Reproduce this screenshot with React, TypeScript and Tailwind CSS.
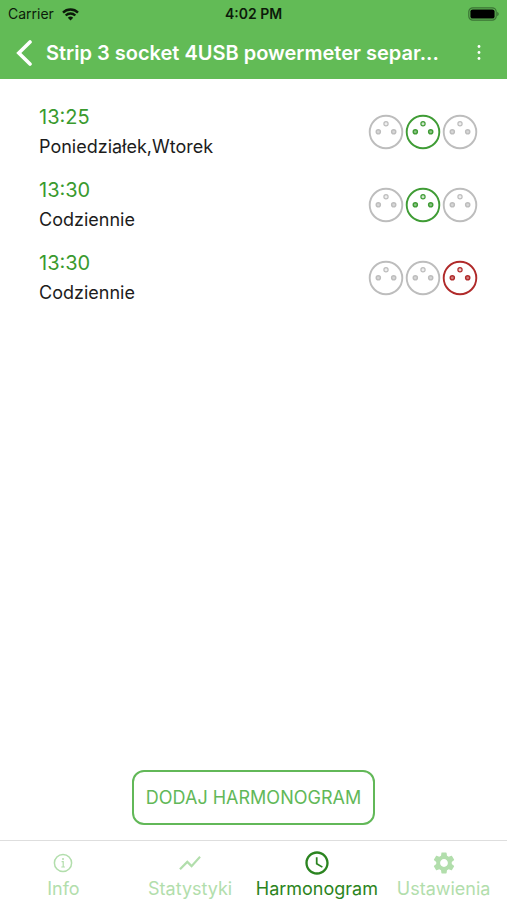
import { useState } from 'react'
import { MdAccessTime, MdSettings, MdShowChart } from 'react-icons/md'

type SocketState = 'idle' | 'on' | 'off'

interface Schedule {
  id: number
  time: string
  days: string
  sockets: SocketState[]
}

const SCHEDULES: Schedule[] = [
  { id: 1, time: '13:25', days: 'Poniedziałek,Wtorek', sockets: ['idle', 'on', 'idle'] },
  { id: 2, time: '13:30', days: 'Codziennie', sockets: ['idle', 'on', 'idle'] },
  { id: 3, time: '13:30', days: 'Codziennie', sockets: ['idle', 'idle', 'off'] },
]

const SOCKET_COLORS: Record<SocketState, string> = {
  idle: 'text-[#bdbdbd]',
  on: 'text-[#3f9c35]',
  off: 'text-[#b02a2a]',
}

const TABS = [
  { id: 'info', label: 'Info', Icon: InfoIcon, size: 20 },
  { id: 'stats', label: 'Statystyki', Icon: MdShowChart, size: 26 },
  { id: 'schedule', label: 'Harmonogram', Icon: MdAccessTime, size: 28 },
  { id: 'settings', label: 'Ustawienia', Icon: MdSettings, size: 26 },
]

function InfoIcon({ size }: { size: number }) {
  return (
    <svg width={size} height={size} viewBox="0 0 20 20" fill="none" stroke="currentColor" strokeWidth="1.5">
      <circle cx="10" cy="10" r="8.6" />
      <path d="M8.6 8.7h1.6v5.2M8.3 14h3.6" strokeWidth="1.2" />
      <circle cx="10" cy="6" r="1" fill="currentColor" stroke="none" />
    </svg>
  )
}

function Socket({ state }: { state: SocketState }) {
  return (
    <svg viewBox="0 0 36 36" className={`size-9 ${SOCKET_COLORS[state]}`} fill="none" stroke="currentColor">
      <circle cx="18" cy="18" r="16.3" strokeWidth="1.9" />
      <circle cx="18" cy="9.8" r="2.1" strokeWidth="1.2" fill="currentColor" fillOpacity="0.25" />
      <circle cx="10.3" cy="17.8" r="2.1" strokeWidth="1.4" fill="currentColor" fillOpacity="0.6" />
      <circle cx="25.7" cy="17.8" r="2.1" strokeWidth="1.4" fill="currentColor" fillOpacity="0.6" />
    </svg>
  )
}

function StatusBar() {
  return (
    <div className="grid grid-cols-3 items-center h-7 px-2 text-sm text-[#0c1a0a]">
      <div className="flex items-center gap-2">
        <span>Carrier</span>
        <svg width="17" height="13" viewBox="0 0 17 13" fill="none" stroke="currentColor" strokeWidth="2.4">
          <path d="M1 4.6a10.6 10.6 0 0 1 15 0" />
          <path d="M3.7 7.5a6.8 6.8 0 0 1 9.6 0" />
          <path d="M8.5 12.6 5.8 9.8a3.8 3.8 0 0 1 5.4 0z" fill="currentColor" stroke="none" />
        </svg>
      </div>
      <span className="text-center font-semibold">4:02 PM</span>
      <svg width="31" height="14" viewBox="0 0 31 14" className="justify-self-end">
        <rect x="0.8" y="0.8" width="27.4" height="12.4" rx="4" fill="none" stroke="#3b7335" strokeWidth="1.2" />
        <rect x="2.4" y="2.4" width="24.2" height="9.2" rx="2.2" fill="#000" />
        <path d="M29.2 4.8c2 .8 2 3.6 0 4.4z" fill="#3b7335" />
      </svg>
    </div>
  )
}

export default function App() {
  const [tab, setTab] = useState('schedule')

  return (
    <div className="flex flex-col min-h-screen bg-white font-['Inter',sans-serif]">
      <header className="bg-[#62bb56]">
        <StatusBar />
        <div className="flex items-center h-[51px] pl-4 pr-5 pb-0.5 text-white">
          <button aria-label="Wstecz" className="w-[30px] shrink-0">
            <svg width="17" height="26" viewBox="0 0 17 26" fill="none" stroke="currentColor" strokeWidth="3.6">
              <path d="M14 2 2.8 13 14 24" strokeLinecap="round" />
            </svg>
          </button>
          <h1 className="flex-1 min-w-0 truncate text-xl font-semibold">Strip 3 socket 4USB powermeter separ...</h1>
          <button aria-label="Menu" className="flex justify-center w-4 shrink-0">
            <svg width="4" height="18" viewBox="0 0 4 18" fill="currentColor">
              <circle cx="2" cy="2.5" r="1.4" />
              <circle cx="2" cy="8.5" r="1.4" />
              <circle cx="2" cy="14.5" r="1.4" />
            </svg>
          </button>
        </div>
      </header>

      {/* Lista harmonogramów */}
      <main className="flex-1 flex flex-col pt-6">
        <ul className="flex flex-col gap-[15px] pl-[39px] pr-[29px]">
          {SCHEDULES.map(s => (
            <li key={s.id} className="flex items-center justify-between">
              <div>
                <p className="text-xl leading-[29px] text-[#3a9a2e]">{s.time}</p>
                <p className="text-lg leading-[29px] text-[#1c1c1c]">{s.days}</p>
              </div>
              <div className="flex gap-px">
                {s.sockets.map((state, i) => <Socket key={i} state={state} />)}
              </div>
            </li>
          ))}
        </ul>

        <button className="mt-auto mb-[15px] self-center h-[55px] px-3 rounded-xl border-2 border-[#62b858] text-lg text-[#62b858]">
          DODAJ HARMONOGRAM
        </button>
      </main>

      <nav className="grid grid-cols-4 h-[60px] border-t border-[#dedede]">
        {TABS.map(({ id, label, Icon, size }) => (
          <button
            key={id}
            onClick={() => setTab(id)}
            className={`flex flex-col items-center pt-2 text-lg leading-6 ${tab === id ? 'text-[#2b8420]' : 'text-[#b2deac]'}`}>
            <span className="flex items-center h-7">
              <Icon size={size} />
            </span>
            {label}
          </button>
        ))}
      </nav>
    </div>
  )
}
